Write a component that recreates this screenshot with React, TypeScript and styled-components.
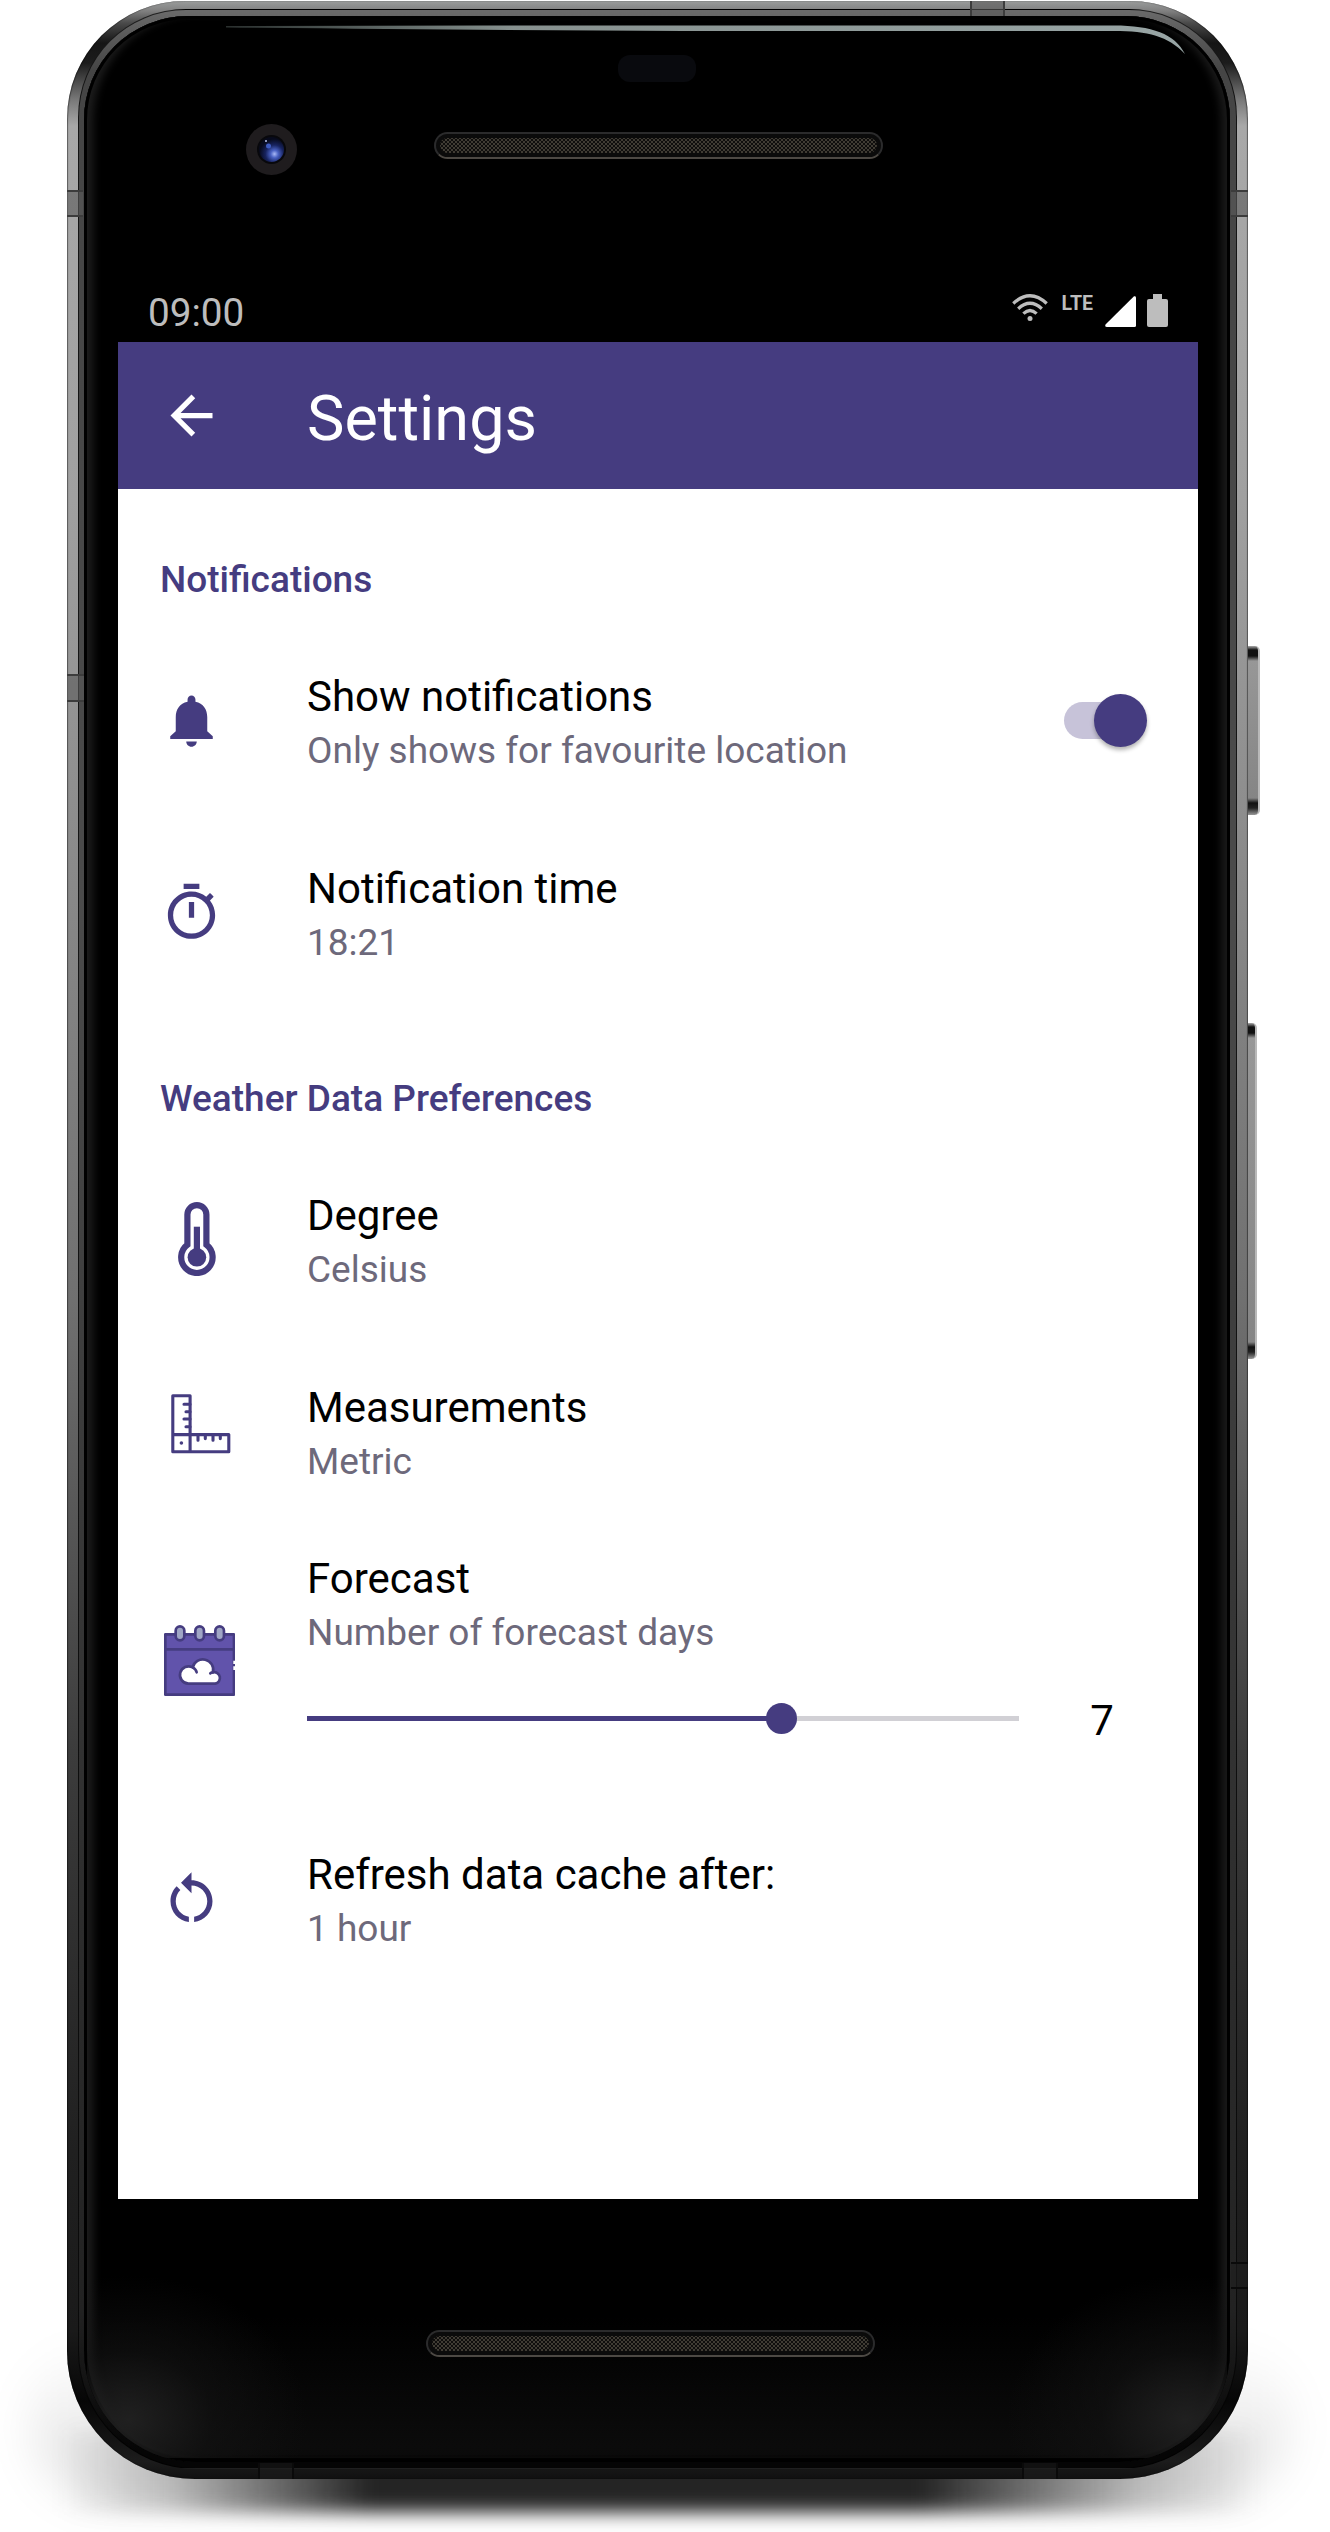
import React from 'react';
import styled, { createGlobalStyle } from 'styled-components';

const PURPLE = '#453c80';
const MUTED = '#6d697b';
const STATUS = '#bdbdbd';

const GlobalStyle = createGlobalStyle`
  body { margin: 0; background: #fff; }
  *, *::before, *::after { box-sizing: border-box; }
  svg { display: block; flex: none; }
`;

/* ---------- device ---------- */

const Page = styled.div`
  position: relative;
  width: 1330px;
  height: 2532px;
  padding: 1px 0 0 67px;
  overflow: hidden;
  background: #fff;
  font-family: Roboto, 'Liberation Sans', sans-serif;
`;

const SoftShadow = styled.div`
  position: absolute;
  left: 30px;
  top: 2340px;
  width: 1260px;
  height: 160px;
  border-radius: 80px;
  background: linear-gradient(180deg, rgba(0, 0, 0, 0), rgba(0, 0, 0, 0.1) 80%);
  filter: blur(22px);
`;

const GroundShadow = styled.div`
  position: absolute;
  left: 60px;
  top: 2430px;
  width: 1200px;
  height: 82px;
  background: linear-gradient(
    90deg,
    rgba(40, 40, 40, 0),
    rgba(40, 40, 40, 0.25) 110px,
    rgba(36, 36, 36, 1) 310px,
    rgba(36, 36, 36, 1) 860px,
    rgba(40, 40, 40, 0.25) 1080px,
    rgba(40, 40, 40, 0)
  );
  filter: blur(9px);
`;

const Device = styled.div`
  position: relative;
  width: 1181px;
  height: 2478px;
  padding: 15px 18px 17px 17px;
  border-radius: 118px 118px 128px 128px;
  background: linear-gradient(
    180deg,
    #9a9c9b 0,
    #808080 10px,
    #4a4a4a 22px,
    #151515 42px,
    #1c1c1c 62px,
    #777 98px,
    #a8a8a8 125px,
    #a0a0a0 500px,
    #888 900px,
    #707070 1300px,
    #3c3c3c 1750px,
    #202020 2150px,
    #1a1a1a 2330px,
    #060606 2400px,
    #1c1c1c 2460px,
    #101010 2478px
  );
  box-shadow: inset 1px 0 1px rgba(0, 0, 0, 0.45), inset -1px 0 1px rgba(0, 0, 0, 0.45);
`;

const RimGroove = styled.div`
  position: absolute;
  inset: 8px 11px 10px 11px;
  border-radius: 108px 108px 118px 118px;
  border: 1px solid rgba(0, 0, 0, 0.7);
  background: linear-gradient(180deg, #6a6a6a 0, #454545 60px, #4b4b4b 900px, #333 1700px, #222 2300px, #050505 2440px);
`;

const Glass = styled.div`
  position: relative;
  height: 100%;
  border-radius: 104px 104px 112px 112px;
  overflow: hidden;
  background: linear-gradient(180deg, #000 0, #000 2300px, #0b0b0b 2430px, #0a0a0a 100%);
  box-shadow:
    inset 0 0 0 3px #000,
    inset 12px 0 8px -3px #1d1d1d,
    inset -12px 0 8px -3px #1a1a1a,
    inset 0 -2px 0 2px #000;
`;

const CornerGlow = styled.div<{ $side: 'left' | 'right' }>`
  position: absolute;
  bottom: 4px;
  ${(p) => p.$side}: 3px;
  width: 230px;
  height: 190px;
  background: radial-gradient(
    ellipse 210px 170px at ${(p) => (p.$side === 'left' ? '18% 80%' : '82% 80%')},
    #202020,
    rgba(20, 20, 20, 0.55) 40%,
    rgba(0, 0, 0, 0) 85%
  );
`;

const Highlight = styled.svg`
  position: absolute;
  left: 0;
  top: 0;
`;

const Band = styled.div<{ $x: number; $y: number; $w: number; $h: number; $dark?: boolean }>`
  position: absolute;
  left: ${(p) => p.$x}px;
  top: ${(p) => p.$y}px;
  width: ${(p) => p.$w}px;
  height: ${(p) => p.$h}px;
  background: ${(p) => (p.$dark ? 'rgba(30,30,30,.5)' : 'rgba(90,90,90,.6)')};
  border: solid ${(p) => (p.$dark ? '#0a0a0a' : '#3c3c3c')};
  border-width: ${(p) => (p.$w > p.$h ? '0 2px' : '2px 0')};
`;

const SideButton = styled.div<{ $y: number; $w: number; $h: number }>`
  position: absolute;
  left: 1247px;
  top: ${(p) => p.$y}px;
  width: ${(p) => p.$w}px;
  height: ${(p) => p.$h}px;
  border-radius: 0 5px 5px 0;
  border-right: 2px solid #b9b9b9;
  background: linear-gradient(180deg, #aaa 0, #111 4px, #111 10px, #979797 15px, #858585 calc(100% - 17px), #111 calc(100% - 12px), #222 calc(100% - 7px), #999 100%);
`;

const TopBezel = styled.div`
  height: 263px;
  padding-top: 39px;
`;

const Sensor = styled.div`
  width: 78px;
  height: 27px;
  margin-left: 534px;
  border-radius: 12px;
  background: #090a0e;
`;

const EarRow = styled.div`
  display: flex;
  align-items: center;
  height: 51px;
  margin-top: 42px;
  padding-left: 162px;
  gap: 137px;
`;

const Grille = styled.div<{ $bottom?: boolean }>`
  width: 449px;
  height: 27px;
  margin: ${(p) => (p.$bottom ? '131px 0 0 342px' : '0 0 8px')};
  padding: 4px;
  border-radius: 14px;
  border: 2px solid #2b2b2c;
  border-bottom-color: #4d4944;
  background: #0b0b0b;
`;

const Mesh = styled.div`
  height: 100%;
  border-radius: 8px;
  background-color: #0f0e0d;
  background-image: radial-gradient(circle, #403c34 0.8px, transparent 1.2px), radial-gradient(circle, #403c34 0.8px, transparent 1.2px);
  background-size: 4px 4px;
  background-position: 0 0, 2px 2px;
`;

/* ---------- screen ---------- */

const Screen = styled.div`
  width: 1080px;
  height: 1920px;
  margin-left: 34px;
  background: #fff;
`;

const StatusBar = styled.div`
  display: flex;
  align-items: flex-start;
  height: 63px;
  padding: 15px 30px 0 30px;
  background: #000;
  color: ${STATUS};
`;

const Clock = styled.span`
  margin-top: -6px;
  margin-right: auto;
  font-size: 38.7px;
  line-height: 50px;
`;

const Network = styled.span`
  margin: 1px 12px 0 14px;
  font-size: 19.5px;
  font-weight: 700;
  line-height: 18px;
`;

const Battery = styled.div`
  width: 21px;
  height: 28px;
  margin: 5px 0 0 11px;
  border-radius: 2px;
  background: ${STATUS};
  &::before {
    content: '';
    display: block;
    width: 9px;
    height: 5px;
    margin: 0 auto;
    transform: translateY(-5px);
    background: ${STATUS};
  }
`;

const Toolbar = styled.header`
  display: flex;
  align-items: center;
  height: 147px;
  padding-left: 42px;
  background: ${PURPLE};
  color: #fff;
`;

const ToolbarTitle = styled.h1`
  margin: 6px 0 0 84px;
  font-size: 63px;
  font-weight: 400;
  line-height: 76px;
`;

const Category = styled.h2`
  height: 135px;
  margin: 0;
  padding: 66px 0 0 42px;
  color: ${PURPLE};
  font-size: 37px;
  font-weight: 500;
  line-height: 49px;
`;

const Row = styled.div<{ $tall?: boolean }>`
  display: flex;
  align-items: ${(p) => (p.$tall ? 'flex-start' : 'center')};
  height: ${(p) => (p.$tall ? 275 : 192)}px;
  padding: 0 51px 0 42px;
`;

const IconSlot = styled.div<{ $lead?: number; $top?: number }>`
  width: 147px;
  padding-left: ${(p) => p.$lead ?? 0}px;
  margin-top: ${(p) => p.$top ?? 0}px;
`;

const Texts = styled.div<{ $top?: number }>`
  flex: 1;
  padding-top: ${(p) => p.$top ?? 5}px;
`;

const Title = styled.div`
  color: #000;
  font-size: 42px;
  line-height: 57px;
`;

const Summary = styled.div`
  color: ${MUTED};
  font-size: 37px;
  line-height: 52px;
`;

const Switch = styled.div`
  display: flex;
  align-items: center;
  width: 83px;
  height: 53px;
`;

const SwitchTrack = styled.div`
  width: 74px;
  height: 37px;
  border-radius: 19px;
  background: #c7c3d9;
`;

const Thumb = styled.div`
  flex: none;
  width: 53px;
  height: 53px;
  margin-left: -44px;
  border-radius: 50%;
  background: ${PURPLE};
  box-shadow: 0 3px 4px rgba(0, 0, 0, 0.3);
`;

const SliderRow = styled.div`
  display: flex;
  align-items: center;
  height: 119px;
`;

const Track = styled.div`
  display: flex;
  align-items: center;
  width: 712px;
  height: 5px;
  background: #d1d0d5;
`;

const Fill = styled.div`
  height: 5px;
  background: ${PURPLE};
`;

const Knob = styled.div`
  flex: none;
  width: 31px;
  height: 31px;
  margin-left: -15.5px;
  border-radius: 50%;
  background: ${PURPLE};
`;

const Value = styled.span`
  width: 50px;
  margin: 5px 0 0 58px;
  text-align: center;
  font-size: 42px;
  line-height: 50px;
`;

/* ---------- drawings ---------- */

const Glyph = ({ d, color = PURPLE }: { d: string; color?: string }) => (
  <svg width="63" height="63" viewBox="0 0 24 24" fill={color}>
    <path d={d} />
  </svg>
);

const BACK = 'M20 11H7.83l5.59-5.59L12 4l-8 8 8 8 1.41-1.41L7.83 13H20v-2z';
const BELL =
  'M12 22c1.1 0 2-.9 2-2h-4c0 1.1.89 2 2 2zm6-5.900V10.800C18 7.900 16.500 5.450 13.500 4.900V4c0-.83-.67-1.5-1.5-1.5s-1.5.67-1.5 1.5v.9C7.500 5.450 6 7.900 6 10.800v5.300l-2.100 1.900v1h16.200v-1l-2.100-1.900z';
const TIMER =
  'M15 1H9v2h6V1zm-4 13h2V8h-2v6zm8.03-6.61l1.42-1.42c-.43-.51-.9-.99-1.41-1.41l-1.42 1.42C16.07 4.74 14.12 4 12 4c-4.97 0-9 4.03-9 9s4.02 9 9 9 9-4.03 9-9c0-2.12-.74-4.07-1.97-5.61zM12 20c-3.87 0-7-3.13-7-7s3.13-7 7-7 7 3.13 7 7-3.13 7-7 7z';
const RESTART =
  'M12 5V2L8 6l4 4V7c3.31 0 6 2.69 6 6 0 2.97-2.17 5.43-5 5.91v2.02c3.95-.49 7-3.85 7-7.93 0-4.42-3.58-8-8-8zm-6 8c0-1.65.67-3.15 1.76-4.24L6.34 7.34C4.9 8.79 4 10.79 4 13c0 4.08 3.05 7.44 7 7.93v-2.02c-2.83-.48-5-2.94-5-5.91z';

const Thermometer = () => (
  <svg width="38" height="74" viewBox="0 0 38 74">
    <path
      d="M9.4 42.8V12.6a9.5 9.5 0 0 1 19 0V42.8a15.7 15.7 0 1 1-19 0z"
      fill="none"
      stroke={PURPLE}
      strokeWidth="6.2"
    />
    <path d="M15.8 24.7h6.2v24h-6.2z" fill={PURPLE} />
    <circle cx="18.9" cy="55.3" r="9.3" fill={PURPLE} />
  </svg>
);

const Ruler = () => (
  <svg width="60" height="60" viewBox="0 0 60 60" fill="none" stroke={PURPLE} strokeWidth="3.1">
    <g strokeLinejoin="round" strokeLinecap="round">
      <path d="M1.8 1.8h17.3v56H1.8zM1.8 40.6h56v17.2h-56z" />
      <path d="M13 10.3h6M15 17.7h4M13 25h6M15 32.7h4" />
      <path d="M27 41v5.2M34.3 41v3.6M42 41v5.2M49.3 41v3.6" />
    </g>
    <circle cx="10.4" cy="49" r="1.8" fill={PURPLE} stroke="none" />
  </svg>
);

const Calendar = () => (
  <svg width="71.3" height="71" viewBox="101 105 214 213" stroke={PURPLE} strokeWidth="8">
    <rect x="105" y="133" width="206" height="181" fill="#6153ab" strokeLinejoin="round" />
    <path d="M105 178h206" />
    {[149, 208, 268].map((x) => (
      <rect key={x} x={x - 13} y="109" width="26" height="42" rx="13" fill="#9fa5c4" />
    ))}
    <path d="M174 281A26 26 0 1 1 187 232A31 31 0 0 1 248 247A17 17 0 1 1 255 281Z" fill="#fff" />
    <path d="M187 232Q197 237 199 247M248 247Q243 246 240 250" fill="none" strokeLinecap="round" />
    <path d="M309 212h6v10h-6zM309 229h6v11h-6z" fill="#fff" stroke="none" />
  </svg>
);

const Camera = () => (
  <svg width="51" height="51" viewBox="0 0 51 51">
    <defs>
      <radialGradient id="lens" cx="62%" cy="68%" r="60%">
        <stop offset="0" stopColor="#a9b9f5" />
        <stop offset=".25" stopColor="#4a62c4" />
        <stop offset=".6" stopColor="#17235f" />
        <stop offset="1" stopColor="#070a1c" />
      </radialGradient>
    </defs>
    <circle cx="25.500" cy="25.500" r="25.500" fill="#1f1c1e" />
    <circle cx="25.500" cy="25.500" r="14.500" fill="#08080c" />
    <circle cx="25.500" cy="25.500" r="12.500" fill="url(#lens)" />
    <circle cx="22.500" cy="22" r="2.500" fill="#3d5bc0" />
    <circle cx="20" cy="17" r="1" fill="#b8c2ee" />
  </svg>
);

const Wifi = () => (
  <svg width="36" height="28" viewBox="0 0 36 28" fill="none" stroke={STATUS} strokeWidth="3.300">
    <path d="M1.300 9.500Q18-6 34.700 9.500M6.200 14.700Q18 3.800 29.800 14.700M11.400 19.600Q18 13.400 24.600 19.600" />
    <circle cx="18" cy="24.500" r="2.500" fill={STATUS} stroke="none" />
  </svg>
);

const Signal = () => (
  <svg width="31" height="33" viewBox="0 0 31 33" fill="#fff">
    <path d="M31 3.500Q31 2 29 2.300L.5 30.500Q-.5 33 2 33H29.500Q31 33 31 31.500z" />
  </svg>
);

const GlassHighlight = () => (
  <Highlight width="1145" height="60" viewBox="0 0 1145 60">
    <defs>
      <linearGradient id="sheen" x1="0" x2="1">
        <stop offset="0" stopColor="#8a9c98" stopOpacity=".3" />
        <stop offset=".3" stopColor="#87918f" />
        <stop offset="1" stopColor="#98a5a5" />
      </linearGradient>
    </defs>
    <path d="M142 10L400 9.500H1030C1068 9.500 1091 18 1101 38C1084 20 1064 15 1030 15H600Q400 14 142 11.500z" fill="url(#sheen)" />
  </Highlight>
);

/* ---------- content ---------- */

const SLIDER = { min: 1, max: 10, value: 7 };

type PreferenceProps = {
  icon: React.ReactNode;
  title: string;
  summary: string;
  lead?: number;
  top?: number;
  control?: React.ReactNode;
};

const Preference = ({ icon, title, summary, lead, top, control }: PreferenceProps) => (
  <Row>
    <IconSlot $lead={lead} $top={top}>{icon}</IconSlot>
    <Texts>
      <Title>{title}</Title>
      <Summary>{summary}</Summary>
    </Texts>
    {control}
  </Row>
);

export default function App() {
  const percent = ((SLIDER.value - SLIDER.min) / (SLIDER.max - SLIDER.min)) * 100;
  return (
    <Page>
      <GlobalStyle />
      <SoftShadow />
      <GroundShadow />
      <SideButton $y={646} $w={13} $h={169} />
      <SideButton $y={1023} $w={10} $h={336} />
      <Device>
        <RimGroove />
        <Band $x={0} $y={189} $w={16} $h={27} />
        <Band $x={0} $y={673} $w={17} $h={28} />
        <Band $x={1164} $y={189} $w={17} $h={27} />
        <Band $x={1164} $y={2261} $w={17} $h={27} $dark />
        <Band $x={903} $y={0} $w={35} $h={15} />
        <Band $x={191} $y={2462} $w={36} $h={16} $dark />
        <Band $x={955} $y={2462} $w={36} $h={16} $dark />
        <Glass>
          <CornerGlow $side="left" />
          <CornerGlow $side="right" />
          <GlassHighlight />
          <TopBezel>
            <Sensor />
            <EarRow>
              <Camera />
              <Grille><Mesh /></Grille>
            </EarRow>
          </TopBezel>
          <Screen>
            <StatusBar>
              <Clock>09:00</Clock>
              <Wifi />
              <Network>LTE</Network>
              <Signal />
              <Battery />
            </StatusBar>
            <Toolbar>
              <Glyph d={BACK} color="#fff" />
              <ToolbarTitle>Settings</ToolbarTitle>
            </Toolbar>
            <Category>Notifications</Category>
            <Preference
              icon={<Glyph d={BELL} />}
              title="Show notifications"
              summary="Only shows for favourite location"
              control={<Switch><SwitchTrack /><Thumb /></Switch>}
            />
            <Preference icon={<Glyph d={TIMER} />} title="Notification time" summary="18:21" />
            <Category>Weather Data Preferences</Category>
            <Preference icon={<Thermometer />} lead={18} title="Degree" summary="Celsius" />
            <Preference icon={<Ruler />} lead={11} top={-15} title="Measurements" summary="Metric" />
            <Row $tall>
              <IconSlot $lead={3.7} $top={98}><Calendar /></IconSlot>
              <Texts $top={23}>
                <Title>Forecast</Title>
                <Summary>Number of forecast days</Summary>
                <SliderRow>
                  <Track>
                    <Fill style={{ width: `${percent}%` }} />
                    <Knob />
                  </Track>
                  <Value>{SLIDER.value}</Value>
                </SliderRow>
              </Texts>
            </Row>
            <Preference icon={<Glyph d={RESTART} />} title="Refresh data cache after:" summary="1 hour" />
          </Screen>
          <Grille $bottom><Mesh /></Grille>
        </Glass>
      </Device>
    </Page>
  );
}
